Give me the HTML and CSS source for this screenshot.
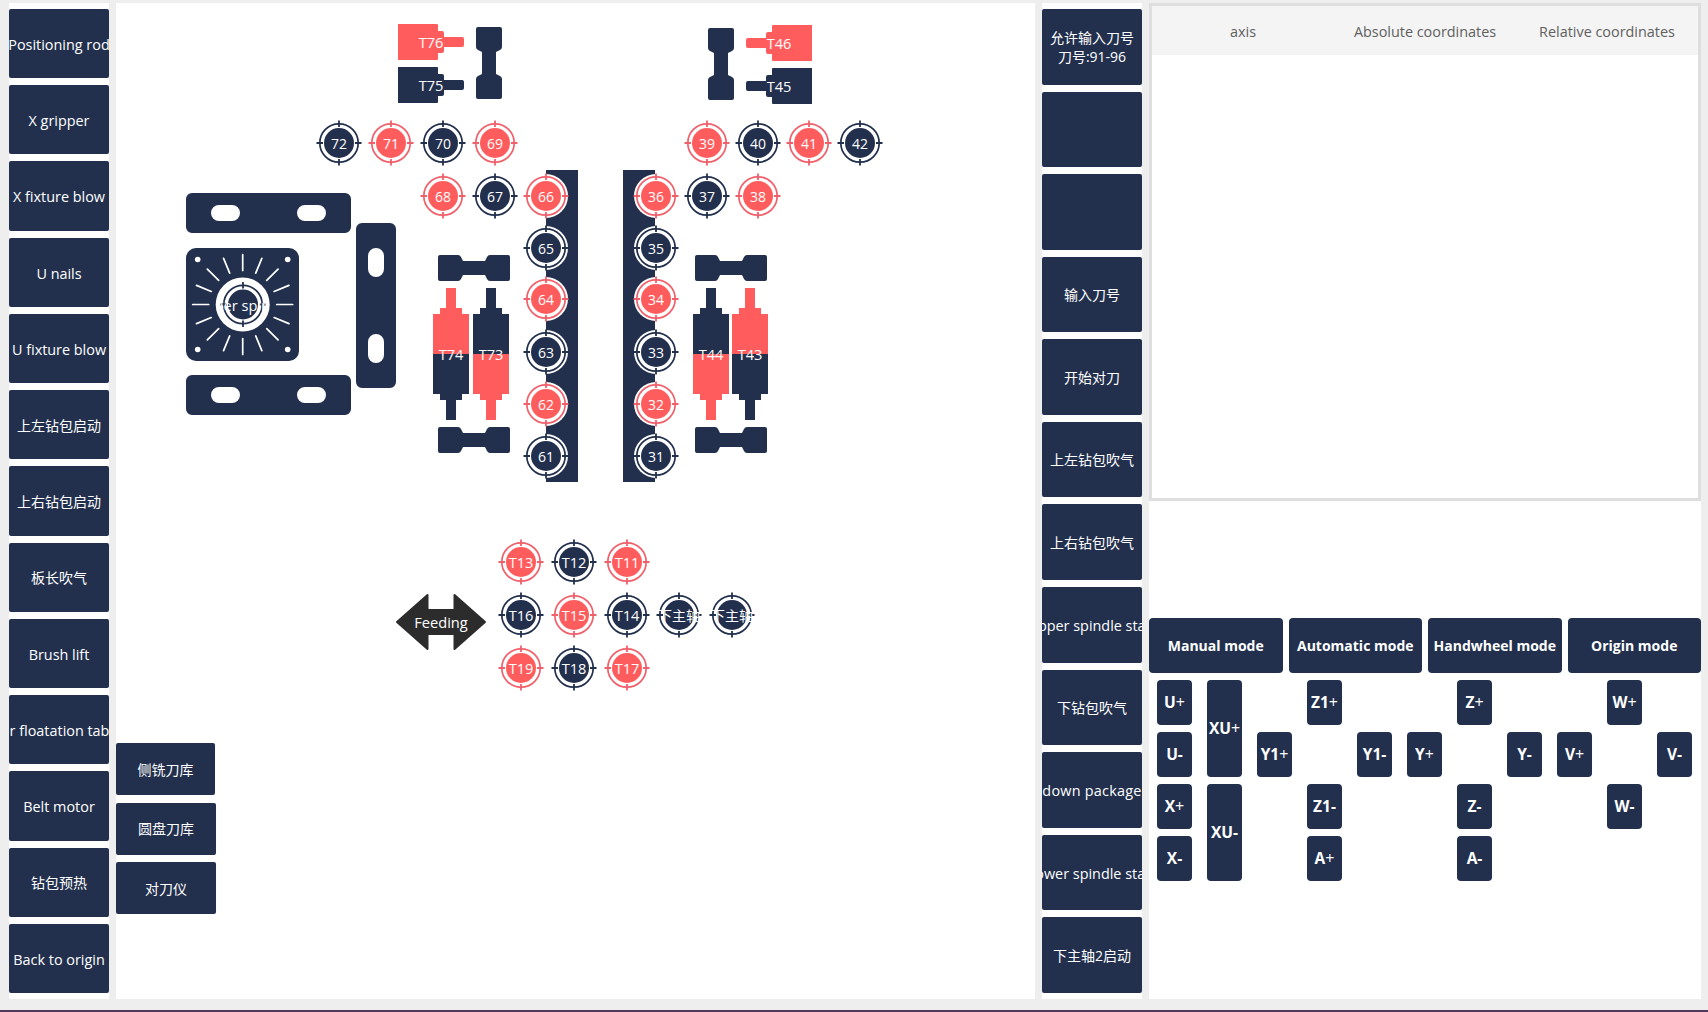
FILE: index.html
```html
<!DOCTYPE html>
<html lang="en">
<head>
<meta charset="utf-8">
<title>Machine control</title>
<link rel="stylesheet" href="styles.css">
</head>
<body>
<div class="screen">
  <nav class="rail">
    <button class="key">Positioning rod</button>
    <button class="key">X gripper</button>
    <button class="key">X fixture blow</button>
    <button class="key">U nails</button>
    <button class="key">U fixture blow</button>
    <button class="key cn">上左钻包启动</button>
    <button class="key cn">上右钻包启动</button>
    <button class="key cn">板长吹气</button>
    <button class="key">Brush lift</button>
    <button class="key">Air floatation table</button>
    <button class="key">Belt motor</button>
    <button class="key cn">钻包预热</button>
    <button class="key">Back to origin</button>
  </nav>

  <main class="board">
    <svg class="machine" viewBox="116 3 919 996">
      <defs>
        <g id="dial">
          <circle class="halo" r="22"/>
          <circle class="ring" r="19.2"/>
          <circle class="disc" r="15"/>
          <path class="tick" d="M0-22.5v6.5M0 22.5v-6.5M-22.5 0h6.5M22.5 0h-6.5"/>
        </g>
        <path id="bell" d="M2 0H20Q22 0 23 2L25 6H47L49 2Q50 0 52 0H70Q72 0 72 2V24Q72 26 70 26H52Q50 26 49 24L47 20H25L23 24Q22 26 20 26H2Q0 26 0 24V2Q0 0 2 0Z"/>
        <path id="motor" d="M0 0H39Q40 0 40 1V7H44Q46 7 46 9V13H64Q66 13 66 15V21Q66 23 64 23H46V27Q46 29 44 29H40V35Q40 36 39 36H0Z"/>
        <path id="half" d="M13 0H23V20H29V26H36V66H0V26H7V20H13Z"/>
        <path id="bracket" fill-rule="evenodd" d="M6 0H159A6 6 0 0 1 165 6V34A6 6 0 0 1 159 40H6A6 6 0 0 1 0 34V6A6 6 0 0 1 6 0ZM33 12A8 8 0 0 0 33 28H46A8 8 0 0 0 46 12ZM119 12A8 8 0 0 0 119 28H132A8 8 0 0 0 132 12Z"/>
        <path id="rays" d="M0-34V-50M0 34V50"/>
        <clipPath id="dialbox"><rect x="-22" y="-22" width="44" height="44"/></clipPath>
      </defs>

      <g class="navy">
        <rect x="546" y="170" width="32" height="312"/>
        <rect x="623" y="170" width="32" height="312"/>
        <use href="#bracket" x="186" y="193"/>
        <use href="#bracket" x="186" y="375"/>
        <use href="#bracket" transform="translate(396 223) rotate(90)"/>
        <rect x="186" y="248" width="113" height="113" rx="10"/>
        <use href="#bell" x="438" y="255"/>
        <use href="#bell" x="438" y="427"/>
        <use href="#bell" x="695" y="255"/>
        <use href="#bell" x="695" y="427"/>
        <use href="#bell" transform="translate(502 27) rotate(90)"/>
        <use href="#bell" transform="translate(734 28) rotate(90)"/>
        <use href="#motor" x="398" y="67"/>
        <use href="#motor" transform="translate(812 68) scale(-1 1)"/>
        <use href="#half" x="473" y="288"/>
        <use href="#half" x="693" y="288"/>
        <use href="#half" transform="translate(433 420) scale(1 -1)"/>
        <use href="#half" transform="translate(732 420) scale(1 -1)"/>
      </g>
      <g class="red">
        <use href="#motor" x="398" y="24"/>
        <use href="#motor" transform="translate(812 25) scale(-1 1)"/>
        <use href="#half" x="433" y="288"/>
        <use href="#half" x="732" y="288"/>
        <use href="#half" transform="translate(473 420) scale(1 -1)"/>
        <use href="#half" transform="translate(693 420) scale(1 -1)"/>
      </g>

      <g class="plate" transform="translate(242.7 304.5)">
        <circle class="white" r="27"/>
        <g class="white"><circle cx="-45" cy="-45" r="2.8"/><circle cx="45" cy="-45" r="2.8"/><circle cx="-45" cy="45" r="2.8"/><circle cx="45" cy="45" r="2.8"/></g>
        <g class="raylines">
          <use href="#rays"/><use href="#rays" transform="rotate(22.5)"/><use href="#rays" transform="rotate(45)"/><use href="#rays" transform="rotate(67.5)"/><use href="#rays" transform="rotate(90)"/><use href="#rays" transform="rotate(112.5)"/><use href="#rays" transform="rotate(135)"/><use href="#rays" transform="rotate(157.5)"/>
        </g>
      </g>

      <g class="dark-dials">
        <use href="#dial" x="243" y="304.5"/>
        <use href="#dial" x="339" y="143"/><use href="#dial" x="443" y="143"/><use href="#dial" x="495" y="196"/>
        <use href="#dial" x="758" y="143"/><use href="#dial" x="860" y="143"/><use href="#dial" x="707" y="196"/>
        <use href="#dial" x="546" y="248"/><use href="#dial" x="546" y="352"/><use href="#dial" x="546" y="456"/>
        <use href="#dial" x="656" y="248"/><use href="#dial" x="656" y="352"/><use href="#dial" x="656" y="456"/>
        <use href="#dial" x="574" y="562"/><use href="#dial" x="521" y="615"/><use href="#dial" x="627" y="615"/>
        <use href="#dial" x="679" y="615"/><use href="#dial" x="732" y="615"/><use href="#dial" x="574" y="668"/>
      </g>
      <g class="red-dials">
        <use href="#dial" x="391" y="143"/><use href="#dial" x="495" y="143"/><use href="#dial" x="443" y="196"/><use href="#dial" x="546" y="196"/>
        <use href="#dial" x="707" y="143"/><use href="#dial" x="809" y="143"/><use href="#dial" x="656" y="196"/><use href="#dial" x="758" y="196"/>
        <use href="#dial" x="546" y="299"/><use href="#dial" x="546" y="404"/><use href="#dial" x="656" y="299"/><use href="#dial" x="656" y="404"/>
        <use href="#dial" x="521" y="562"/><use href="#dial" x="627" y="562"/><use href="#dial" x="574" y="615"/>
        <use href="#dial" x="521" y="668"/><use href="#dial" x="627" y="668"/>
      </g>

      <path class="arrow" d="M397 622L427.500 595V610H454.500V595L485 622L454.500 649V634H427.500V649Z"/>

      <g class="labels">
        <text x="339" y="149">72</text><text x="391" y="149">71</text><text x="443" y="149">70</text><text x="495" y="149">69</text>
        <text x="443" y="202">68</text><text x="495" y="202">67</text><text x="546" y="202">66</text>
        <text x="546" y="254">65</text><text x="546" y="305">64</text><text x="546" y="358">63</text><text x="546" y="410">62</text><text x="546" y="462">61</text>
        <text x="707" y="149">39</text><text x="758" y="149">40</text><text x="809" y="149">41</text><text x="860" y="149">42</text>
        <text x="656" y="202">36</text><text x="707" y="202">37</text><text x="758" y="202">38</text>
        <text x="656" y="254">35</text><text x="656" y="305">34</text><text x="656" y="358">33</text><text x="656" y="410">32</text><text x="656" y="462">31</text>
        <text x="679" y="621">下主轴</text><text x="732" y="621">下主轴</text>
        <g class="wide">
          <text x="431" y="48">T76</text><text x="431" y="91">T75</text><text x="779" y="49">T46</text><text x="779" y="92">T45</text>
          <text x="451" y="360">T74</text><text x="491" y="360">T73</text><text x="711" y="360">T44</text><text x="750" y="360">T43</text>
          <text x="521" y="568">T13</text><text x="574" y="568">T12</text><text x="627" y="568">T11</text>
          <text x="521" y="621">T16</text><text x="574" y="621">T15</text><text x="627" y="621">T14</text>
          <text x="521" y="674">T19</text><text x="574" y="674">T18</text><text x="627" y="674">T17</text>
          <text x="441" y="628">Feeding</text>
          <g transform="translate(243 304.5)" clip-path="url(#dialbox)"><text x="0" y="6">Upper spindle</text></g>
        </g>
      </g>
    </svg>
    <div class="stores">
      <button class="key cn store narrow">侧铣刀库</button>
      <button class="key cn store">圆盘刀库</button>
      <button class="key cn store">对刀仪</button>
    </div>
  </main>

  <nav class="rail">
    <button class="key cn">允许输入刀号<br>刀号:91-96</button>
    <button class="key"></button>
    <button class="key"></button>
    <button class="key cn">输入刀号</button>
    <button class="key cn">开始对刀</button>
    <button class="key cn">上左钻包吹气</button>
    <button class="key cn">上右钻包吹气</button>
    <button class="key">Upper spindle start</button>
    <button class="key cn">下钻包吹气</button>
    <button class="key loose">down package</button>
    <button class="key">Lower spindle start</button>
    <button class="key cn">下主轴2启动</button>
  </nav>

  <section class="side">
    <div class="coords">
      <div class="coords-head"><span>axis</span><span>Absolute coordinates</span><span>Relative coordinates</span></div>
    </div>
    <div class="modes">
      <button class="mode">Manual mode</button>
      <button class="mode">Automatic mode</button>
      <button class="mode">Handwheel mode</button>
      <button class="mode">Origin mode</button>
    </div>
    <div class="jog">
      <button class="mode c1 r1">U<i>+</i></button>
      <button class="mode c1 r2">U-</button>
      <button class="mode c1 r3">X<i>+</i></button>
      <button class="mode c1 r4">X-</button>
      <button class="mode c2 r1 tall">XU<i>+</i></button>
      <button class="mode c2 r3 tall">XU-</button>
      <button class="mode c3 r2">Y1<i>+</i></button>
      <button class="mode c4 r1">Z1<i>+</i></button>
      <button class="mode c4 r3">Z1-</button>
      <button class="mode c4 r4">A<i>+</i></button>
      <button class="mode c5 r2">Y1-</button>
      <button class="mode c6 r2">Y<i>+</i></button>
      <button class="mode c7 r1">Z<i>+</i></button>
      <button class="mode c7 r3">Z-</button>
      <button class="mode c7 r4">A-</button>
      <button class="mode c8 r2">Y-</button>
      <button class="mode c9 r2">V<i>+</i></button>
      <button class="mode c10 r1">W<i>+</i></button>
      <button class="mode c10 r3">W-</button>
      <button class="mode c11 r2">V-</button>
    </div>
  </section>
</div>
</body>
</html>
```
FILE: styles.css
```css
* { box-sizing: border-box; }

body {
  margin: 0;
  background: #eee;
  font: 14.4px/19.5px "Open Sans", "Noto Sans CJK SC", sans-serif;
}

.screen {
  display: grid;
  grid-template-columns: 100px 919px 100px 552px;
  column-gap: 7px;
  height: 1012px;
  padding: 3px 7px 11px 9px;
  border-bottom: 2px solid #52395c;
}

.rail {
  display: flex;
  flex-direction: column;
  gap: 7px;
  padding: 6px 0;
  background: #fff;
  min-height: 0;
}

.key {
  display: flex;
  flex: 1 1 0;
  align-items: center;
  justify-content: center;
  min-height: 0;
  padding: 2px 0 0;
  border: 0;
  border-radius: 2px;
  background: #22304d;
  color: #fff;
  font: inherit;
  white-space: nowrap;
  overflow: hidden;
}

.cn { padding: 1.5px 0 0.5px; font-size: 14px; }
.loose { letter-spacing: 0.25px; }

.board {
  position: relative;
  background: #fff;
}

.machine {
  position: absolute;
  inset: 0;
  width: 919px;
  height: 996px;
}

.stores {
  position: relative;
  display: flex;
  flex-direction: column;
  gap: 7.500px;
  width: 100px;
  padding-top: 740px;
}

.store { flex: none; height: 52px; }
.narrow { width: 99px; }

.navy { fill: #22304d; }
.red { fill: #ff5d5d; }
.white, .halo { fill: #fff; }
.raylines { stroke: #fff; stroke-width: 1.7; stroke-linecap: round; }
.ring { fill: none; stroke-width: 1.7; }
.tick { fill: none; stroke-width: 1.8; }
.dark-dials { fill: #22304d; stroke: #22304d; }
.red-dials { fill: #ff5d5d; stroke: #f0606b; }
.halo, .disc { stroke: none; }
.red-dials .halo { fill: #fff5f0; }
.arrow { fill: #2c2c2c; stroke: #2c2c2c; stroke-width: 2; stroke-linejoin: round; }
.labels { fill: #fff; font-size: 14px; text-anchor: middle; }
.wide { font-size: 14.6px; }

.side {
  display: flex;
  flex-direction: column;
  background: #fff;
}

.coords {
  height: 498px;
  border: 3px solid #dedede;
}

.coords-head {
  display: grid;
  grid-template-columns: repeat(3, 1fr);
  align-items: center;
  height: 49px;
  padding-top: 3px;
  background: #f4f4f4;
  color: #606060;
  text-align: center;
}

.modes {
  display: grid;
  grid-template-columns: repeat(4, 1fr);
  gap: 6px;
  height: 55px;
  margin-top: 117px;
}

.mode {
  padding: 0;
  border: 0;
  border-radius: 4px;
  background: #22304d;
  color: #fff;
  font: inherit;
  font-size: 14px;
  font-weight: 700;
  white-space: nowrap;
}

.mode i { font-style: normal; font-weight: 400; }

.jog {
  display: grid;
  grid-template-columns: repeat(11, 35px);
  grid-template-rows: repeat(4, 45px);
  gap: 7px 15px;
  padding: 7px 8px;
}

.jog .mode { font-size: 15.500px; }
.jog i { font-size: 16px; }

.c1 { grid-column: 1; }
.c2 { grid-column: 2; }
.c3 { grid-column: 3; }
.c4 { grid-column: 4; }
.c5 { grid-column: 5; }
.c6 { grid-column: 6; }
.c7 { grid-column: 7; }
.c8 { grid-column: 8; }
.c9 { grid-column: 9; }
.c10 { grid-column: 10; }
.c11 { grid-column: 11; }
.r1 { grid-row: 1; }
.r2 { grid-row: 2; }
.r3 { grid-row: 3; }
.r4 { grid-row: 4; }
.tall { grid-row-end: span 2; }
```
